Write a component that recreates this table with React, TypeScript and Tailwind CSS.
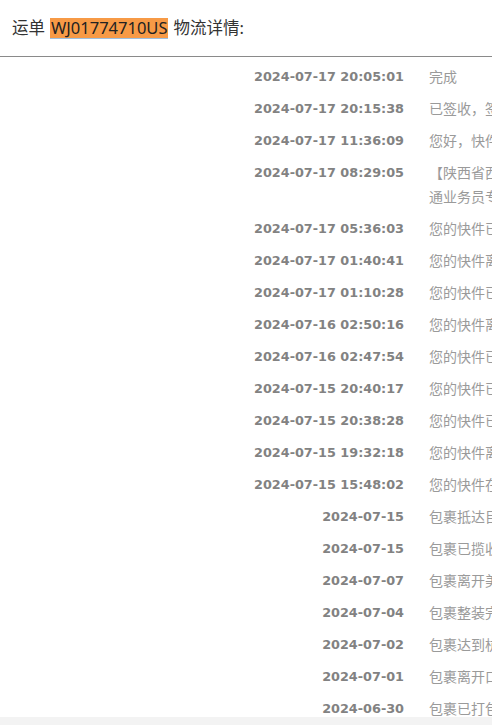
const rows: { time: string; lines: string[] }[] = [
  { time: "2024-07-17 20:05:01", lines: ["完成"] },
  { time: "2024-07-17 20:15:38", lines: ["已签收，签收人凭取货码签收，感谢使用韵达快递"] },
  { time: "2024-07-17 11:36:09", lines: ["您好，快件已到达驿站，请凭取件码取件"] },
  {
    time: "2024-07-17 08:29:05",
    lines: ["【陕西省西安市雁塔区公司】派件中，派件员：普", "通业务员专线电话，请保持电话畅通"],
  },
  { time: "2024-07-17 05:36:03", lines: ["您的快件已到达【陕西省西安市雁塔区公司】"] },
  { time: "2024-07-17 01:40:41", lines: ["您的快件离开【陕西西安分拨交付中心】"] },
  { time: "2024-07-17 01:10:28", lines: ["您的快件已到达【陕西西安分拨交付中心】"] },
  { time: "2024-07-16 02:50:16", lines: ["您的快件离开【上海分拨中心】"] },
  { time: "2024-07-16 02:47:54", lines: ["您的快件已到达【上海分拨中心】"] },
  { time: "2024-07-15 20:40:17", lines: ["您的快件已在【上海国际转运中心】完成揽收"] },
  { time: "2024-07-15 20:38:28", lines: ["您的快件已到达【上海国际转运中心】"] },
  { time: "2024-07-15 19:32:18", lines: ["您的快件离开海关监管区"] },
  { time: "2024-07-15 15:48:02", lines: ["您的快件在海关清关完成"] },
  { time: "2024-07-15", lines: ["包裹抵达目的国机场"] },
  { time: "2024-07-15", lines: ["包裹已揽收"] },
  { time: "2024-07-07", lines: ["包裹离开美国仓库"] },
  { time: "2024-07-04", lines: ["包裹整装完毕"] },
  { time: "2024-07-02", lines: ["包裹达到杭州仓库"] },
  { time: "2024-07-01", lines: ["包裹离开口岸"] },
  { time: "2024-06-30", lines: ["包裹已打包完成"] },
];

export default function App() {
  return (
    <div
      className="relative w-[492px] h-[725px] overflow-hidden bg-white"
      style={{ fontFamily: '"Noto Sans", "Noto Sans CJK SC", sans-serif' }}
    >
      <div className="h-[56px] flex items-center pl-3 text-[16.5px] text-[#333]">
        <span>运单</span>
        <span className="ml-[5px] mr-[5px] bg-[#f79a46] text-[#222] px-[1px] leading-[20px] border-b border-[#9cbfe0]">
          WJ01774710US
        </span>
        <span>物流详情:</span>
      </div>
      <div className="h-px bg-[#8a8a8a] w-full" />
      <div className="mt-1 w-[900px]">
        {rows.map((r, i) => (
          <div key={i} className="flex py-1">
            <div
              className="w-[404px] shrink-0 text-right text-[12.8px] font-bold leading-6 text-[#828282]"
              style={{ fontFamily: '"DejaVu Sans", sans-serif' }}
            >
              {r.time}
            </div>
            <div className="ml-[25px] w-[420px] text-[14px] leading-6 text-[#9a9a9a] whitespace-nowrap">
              {r.lines.map((l, j) => (
                <div key={j}>{l}</div>
              ))}
            </div>
          </div>
        ))}
      </div>
      <div className="absolute left-0 bottom-0 w-full h-[8px] bg-[#f3f3f3]" />
    </div>
  );
}
